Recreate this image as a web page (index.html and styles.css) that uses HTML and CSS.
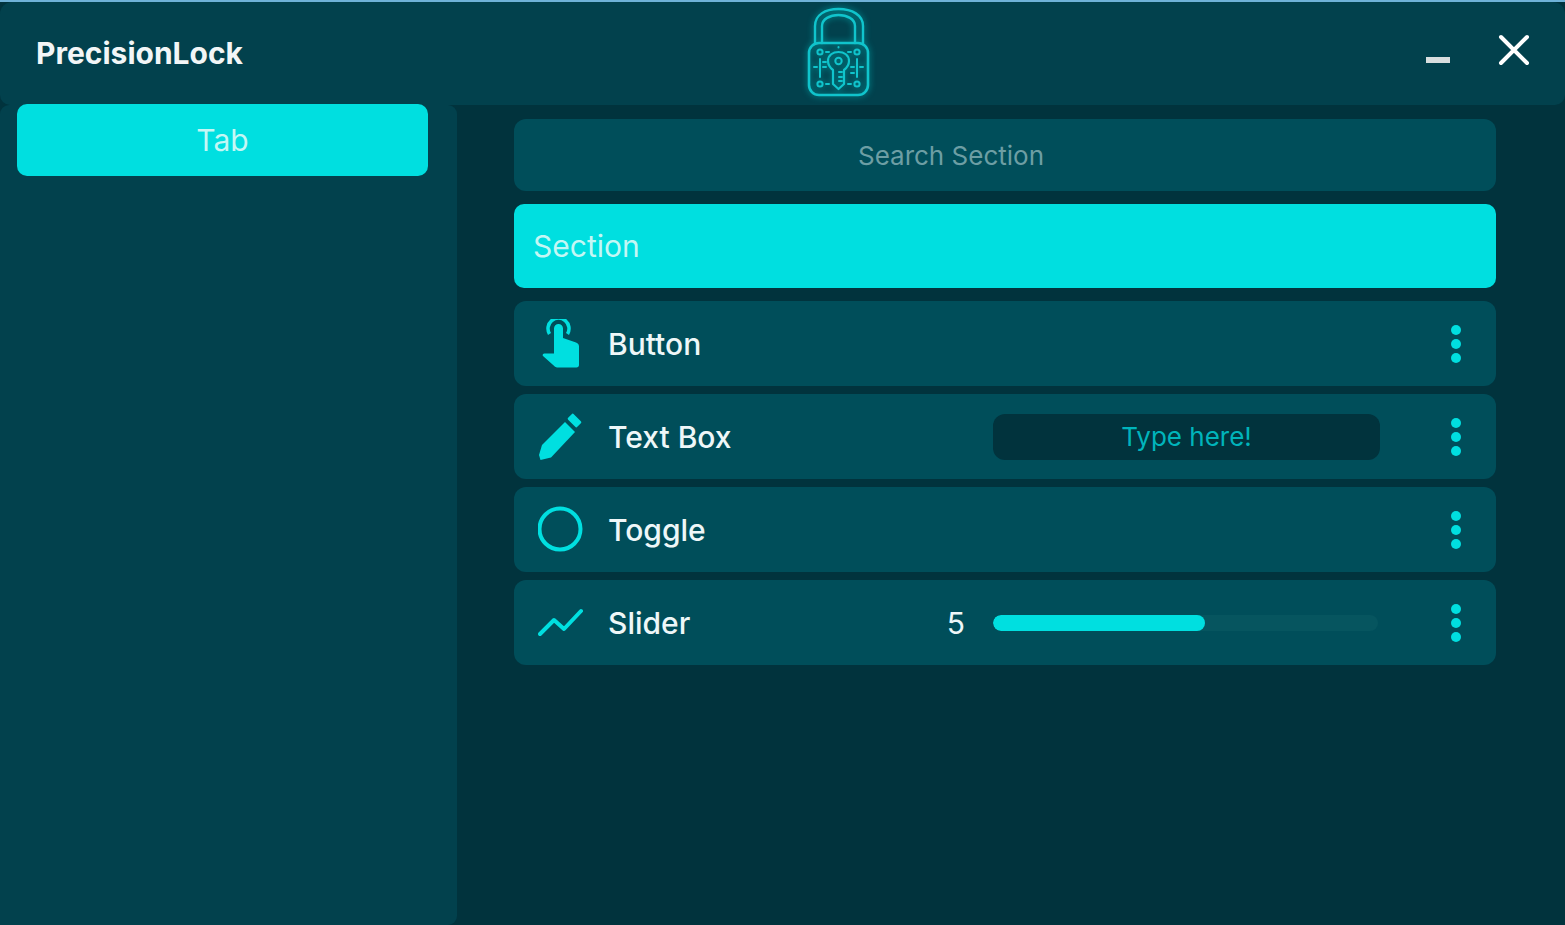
FILE: index.html
```html
<!DOCTYPE html>
<html lang="en">
<head>
<meta charset="utf-8">
<title>PrecisionLock</title>
<link rel="stylesheet" href="styles.css">
</head>
<body>
<div class="window">
  <header class="header">
    <div class="title">PrecisionLock</div>
    <svg class="logo" viewBox="0 0 78 100" fill="none" stroke="#10c4cc" stroke-width="2" stroke-linecap="round" stroke-linejoin="round">
      <path stroke-width="2.4" d="M15 43V26C15 15 25 9 38.500 9S63 15 63 26V43"/>
      <path stroke-width="2.4" d="M22 43V26C22 19 30 15 38.500 15S55 19 55 26V43"/>
      <rect x="9" y="43" width="59" height="52" rx="10" stroke-width="2.6"/>
      <path stroke-width="2.200" d="M33 70C29 67 28 64 28 61C28 55 33 52 38.500 52S49 55 49 61C49 64 48 67 44 70V84L38.500 89L33 84Z"/>
      <circle cx="38.500" cy="61" r="3.200"/>
      <path d="M39 72H42M39 77H42M39 81H42"/>
      <circle cx="20" cy="52" r="2.600"/><circle cx="57" cy="52" r="2.600"/>
      <circle cx="20" cy="84" r="2.600"/><circle cx="57" cy="84" r="2.600"/>
      <path d="M26 52H29M48 52H51M26 84H29M48 84H51M38.500 47V47.500"/>
      <path d="M20 59V77M57 59V77M14 67H17M23 67H26M51 67H54M60 67H63M23 62H26M51 73H54"/>
    </svg>
    <div class="spacer"></div>
    <div class="controls">
      <div class="minimize"></div>
      <svg class="close" viewBox="0 0 32 32" stroke="#fff" stroke-width="4" stroke-linecap="round"><path d="M3 3L29 29M29 3L3 29"/></svg>
    </div>
  </header>
  <div class="content">
    <aside class="sidebar">
      <div class="tab">Tab</div>
    </aside>
    <main class="main">
      <div class="search">Search Section</div>
      <div class="section">Section</div>
      <div class="rows">
        <div class="row">
          <svg class="icon" viewBox="0 0 46 50" fill="#00dfe0"><path d="M16 29V9.500A4.500 4.500 0 0 1 25 9.500V19L38 23.500C40 24.200 41 25.500 41 27.500V46C41 47.500 40 48.500 38.500 48.500H19C18 48.500 17.200 48 16.500 47.300L5 37C4 36 5 34.500 6.500 34.500H16Z"/><path d="M11.500 15A10.500 10.500 0 1 1 29.500 15" fill="none" stroke="#00dfe0" stroke-width="3.500"/></svg>
          <span class="label">Button</span>
          <div class="dots"><i></i><i></i><i></i></div>
        </div>
        <div class="row">
          <svg class="icon" viewBox="0 0 46 50" fill="#00dfe0"><path d="M1 43L4 33L27 10L37 20L13 45.500L2.500 48Z"/><rect x="32.500" y="2" width="8" height="13" rx="1.500" transform="rotate(-45 36.500 8.500) translate(0 0)"/></svg>
          <span class="label">Text Box</span>
          <div class="textbox">Type here!</div>
          <div class="dots"><i></i><i></i><i></i></div>
        </div>
        <div class="row">
          <svg class="icon" viewBox="0 0 46 50" fill="none" stroke="#00dfe0" stroke-width="4"><circle cx="22" cy="24" r="20.500"/></svg>
          <span class="label">Toggle</span>
          <div class="dots"><i></i><i></i><i></i></div>
        </div>
        <div class="row">
          <svg class="icon" viewBox="0 0 46 50" fill="none" stroke="#00dfe0" stroke-width="4" stroke-linecap="round" stroke-linejoin="round"><path d="M2 36L16 22L26 31L43 13"/></svg>
          <span class="label">Slider</span>
          <span class="value">5</span>
          <div class="track"><div class="fill"></div></div>
          <div class="dots"><i></i><i></i><i></i></div>
        </div>
      </div>
    </main>
  </div>
</div>
</body>
</html>
```
FILE: styles.css
```css
* { box-sizing: border-box; }
html, body { height: 100%; }
body {
  margin: 0;
  background: #01333d;
  border-top: 2px solid #6fb2d8;
  font-family: Inter, "Noto Sans", sans-serif;
  color: #eef7f8;
  overflow: hidden;
}
.window {
  height: 923px;
  display: flex;
  flex-direction: column;
  background: #01333d;
}
.header {
  height: 103px;
  flex: none;
  display: flex;
  align-items: flex-start;
  background: #02414d;
  border-radius: 12px 12px 10px 10px;
  padding-left: 36px;
}
.title {
  width: 764px;
  font-size: 30px;
  font-weight: 700;
  line-height: 36px;
  margin-top: 33px;
  color: #f2f6f7;
}
.logo {
  width: 78px;
  height: 100px;
  margin-top: -2px;
  filter: drop-shadow(0 0 3px rgba(0, 223, 224, .6));
}
.spacer { flex: 1; }
.controls {
  display: flex;
  align-items: center;
  gap: 48px;
  margin-top: 32px;
  margin-right: 35px;
}
.minimize { width: 24px; height: 6px; background: #d8dedf; margin-top: 20px; }
.close { width: 32px; height: 32px; }
.content { flex: 1; display: flex; min-height: 0; }
.sidebar {
  width: 457px;
  flex: none;
  background: #02414d;
  border-radius: 9px 9px 9px 0;
  padding: 0 29px 0 17px;
}
.tab {
  height: 72px;
  margin-top: -1px;
  display: flex;
  align-items: center;
  justify-content: center;
  background: #00dfe0;
  border-radius: 10px;
  font-size: 30px;
  color: #c4f7f5;
}
.main {
  flex: 1;
  padding: 14px 69px 0 57px;
  display: flex;
  flex-direction: column;
}
.search {
  height: 72px;
  display: flex;
  align-items: center;
  justify-content: center;
  padding-right: 108px;
  background: #004e5a;
  border-radius: 12px;
  font-size: 26px;
  color: #6d9ea4;
}
.section {
  height: 84px;
  margin-top: 13px;
  display: flex;
  align-items: center;
  padding-left: 19px;
  background: #00dfe0;
  border-radius: 10px;
  font-size: 30px;
  color: #c4f7f5;
}
.rows {
  margin-top: 13px;
  display: flex;
  flex-direction: column;
  gap: 8px;
}
.row {
  height: 85px;
  display: flex;
  align-items: center;
  padding: 0 35px 0 24px;
  background: #004e5a;
  border-radius: 12px;
}
.icon { width: 46px; height: 50px; flex: none; }
.label { margin-left: 24px; font-size: 30px; font-weight: 500; }
.textbox {
  width: 387px;
  height: 46px;
  margin-left: auto;
  margin-right: 71px;
  display: flex;
  align-items: center;
  justify-content: center;
  background: #01333d;
  border-radius: 12px;
  font-size: 26px;
  color: #00b4bb;
}
.value { margin-left: auto; margin-right: 28px; font-size: 30px; }
.track {
  width: 385px;
  height: 16px;
  margin-right: 73px;
  background: #06555f;
  border-radius: 8px;
  overflow: hidden;
}
.fill { width: 212px; height: 100%; background: #00dfe0; border-radius: 8px; }
.dots {
  width: 10px;
  display: flex;
  flex-direction: column;
  gap: 4px;
  margin-left: auto;
}
.textbox + .dots, .track + .dots { margin-left: 0; }
.dots i { display: block; width: 10px; height: 10px; border-radius: 50%; background: #00dfe0; }
```
